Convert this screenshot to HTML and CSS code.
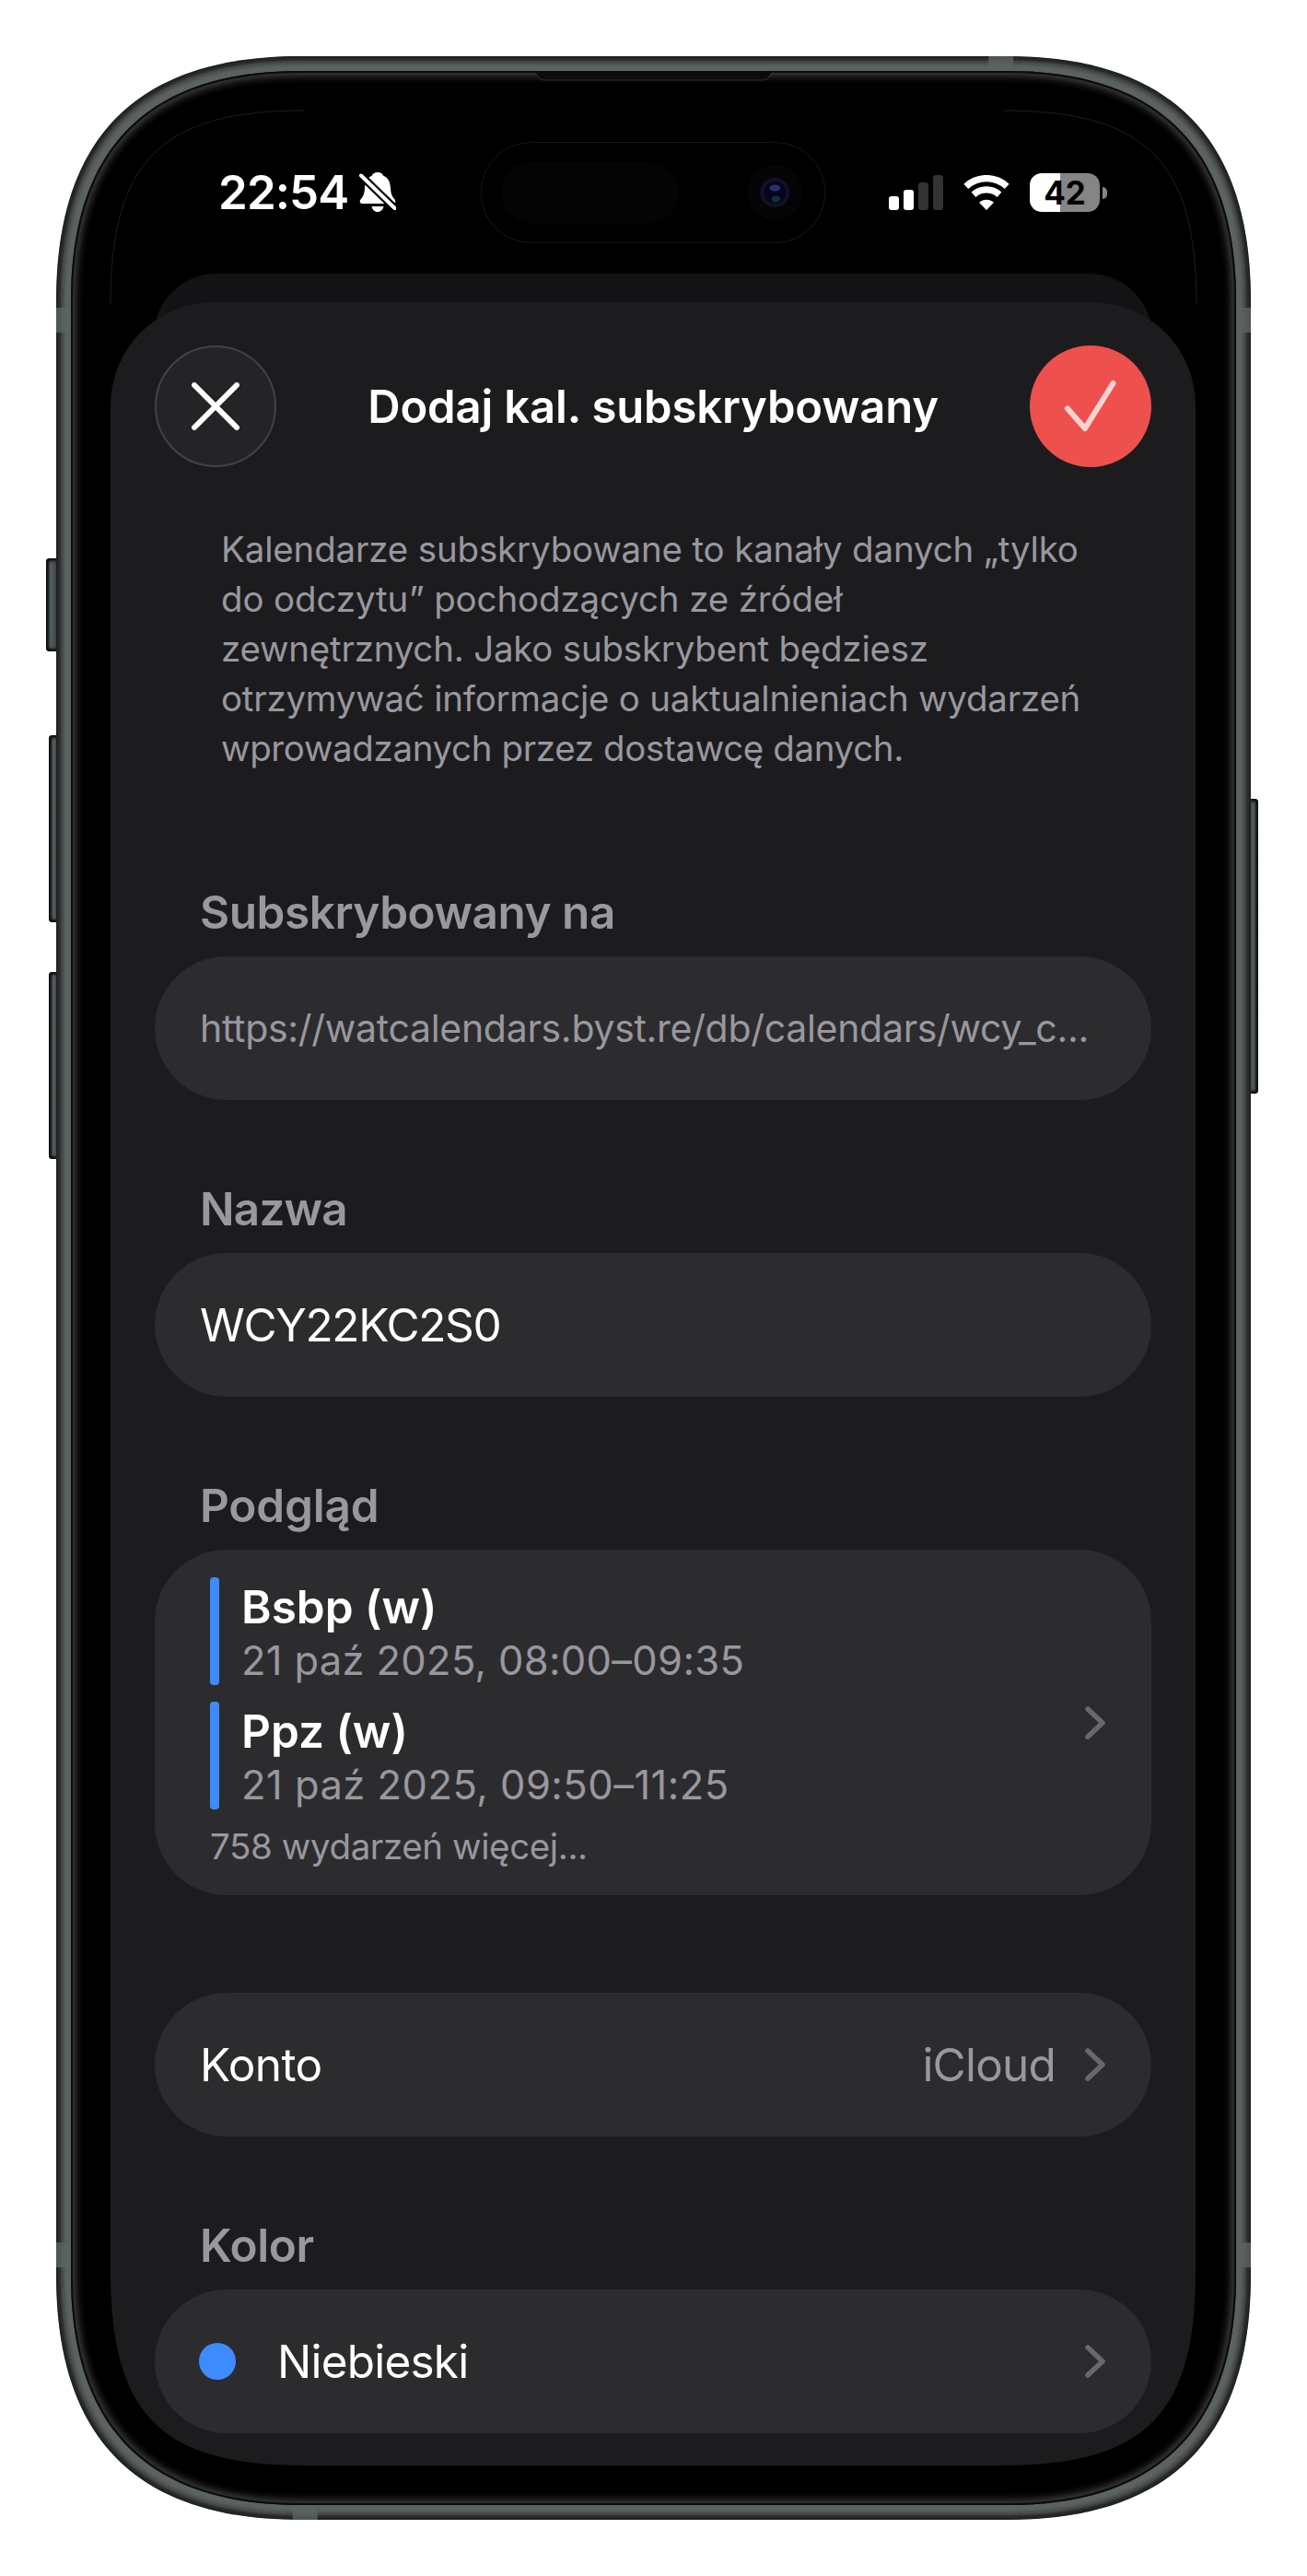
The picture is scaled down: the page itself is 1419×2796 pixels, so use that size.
FILE: index.html
```html
<!DOCTYPE html>
<html lang="pl">
<head>
<meta charset="utf-8">
<title>Dodaj kal. subskrybowany</title>
<link rel="stylesheet" href="styles.css">
</head>
<body>
<div class="phone">
  <span class="key key-action"></span>
  <span class="key key-up"></span>
  <span class="key key-down"></span>
  <span class="key key-power"></span>
  <svg class="frame" viewBox="0 0 1298 2674" preserveAspectRatio="none" aria-hidden="true">
    <defs>
      <path id="shell" d="M0 265C0 88 88 0 265 0H1033C1210 0 1298 88 1298 265V2409C1298 2586 1210 2674 1033 2674H265C88 2674 0 2586 0 2409Z"/>
      <clipPath id="shellClip"><use href="#shell"/></clipPath>
      <path id="glass" d="M16 265C16 100 100 16 265 16H1033C1198 16 1282 100 1282 265V2409C1282 2574 1198 2658 1033 2658H265C100 2658 16 2574 16 2409Z"/>
      <clipPath id="glassClip"><use href="#glass"/></clipPath>
      <filter id="soft" x="-5%" y="-5%" width="110%" height="110%"><feGaussianBlur stdDeviation="4"/></filter>
      <filter id="softRim" x="-5%" y="-5%" width="110%" height="110%"><feGaussianBlur stdDeviation="3"/></filter>
    </defs>
    <g clip-path="url(#shellClip)">
      <use href="#shell" fill="#5c6162"/>
      <use href="#shell" fill="none" stroke="#121617" stroke-width="10" filter="url(#softRim)"/>
      <g fill="#5d6162" opacity=".8">
        <path d="M0 273h18v27H0zM1280 273h18v27h-18zM0 2373h18v27H0zM1280 2373h18v27h-18zM1013 0h27v18h-27zM257 2656h27v18h-27z"/>
      </g>
    </g>
    <use href="#glass" fill="#000"/>
    <g clip-path="url(#glassClip)">
      <use href="#glass" fill="none" stroke="#444" stroke-width="10" filter="url(#soft)"/>
      <use href="#glass" fill="none" stroke="#0a0b0b" stroke-width="4"/>
    </g>
    <path d="M520 17h258l-6 7q-2 2-6 2H532q-4 0-6-2z" fill="#0b0b0b"/>
    <path d="M518 18q3 0 5 4t7 4h238q5 0 7-4t5-4" fill="none" stroke="#303030"/>
    <path d="M59 269C59 114 114 59 269 59M1029 59C1184 59 1239 114 1239 269" fill="none" stroke="#1d1d1d"/>
    <rect x="461.500" y="93.500" width="374" height="109" rx="54.500" fill="none" stroke="#181818"/>
    <rect x="483" y="115" width="194" height="66" rx="33" fill="#040404"/>
    <circle cx="781" cy="148" r="30" fill="#060407"/>
    <circle cx="781" cy="148" r="16" fill="#111226"/>
    <circle cx="781" cy="148" r="12" fill="#05061c"/>
    <ellipse cx="781" cy="143" rx="6" ry="3.500" fill="#2a2f6e"/>
    <ellipse cx="782" cy="155" rx="5" ry="3.500" fill="#0c3140"/>
  </svg>

  <main class="screen">
    <div class="status">
      <div class="status-left">
        <span class="time">22:54</span>
        <svg class="bell" viewBox="0 0 40 44">
          <path d="M20 0c3.500 0 5.500 1.800 6.200 3.800C32 6.500 33.600 11 34 17c.3 6 1.500 9 4.500 12.500 1.500 2 .8 4.500-2 4.500H3.500c-2.800 0-3.500-2.500-2-4.500C4.500 26 5.700 23 6 17 6.400 11 8 6.500 13.800 3.800 14.500 1.800 16.500 0 20 0zM13.500 37h13c-.8 3.700-3.200 6-6.500 6s-5.700-2.300-6.500-6z" fill="#fff"/>
          <path d="M2 3.500 38.500 39" stroke="#000" stroke-width="8.500"/>
          <path d="M2 3.500 38.500 39" stroke="#fff" stroke-width="4" stroke-linecap="round"/>
        </svg>
      </div>
      <div class="status-right">
        <svg class="signal" viewBox="0 0 59 38">
          <rect y="23" width="11" height="15" rx="3" fill="#fff"/>
          <rect x="16" y="16" width="11" height="22" rx="3" fill="#fff"/>
          <rect x="32" y="8" width="11" height="30" rx="3" fill="#333"/>
          <rect x="48" width="11" height="38" rx="3" fill="#333"/>
        </svg>
        <svg class="wifi" viewBox="0 0 50 38">
          <g fill="none" stroke="#fff" stroke-width="7.200">
            <path d="M2.800 12.300C15.500.600 34.500.600 47.200 12.300"/>
            <path d="M11 21.200c8-7 20-7 28 0"/>
          </g>
          <path d="M25 38l-8-8.200c4.600-4.200 11.400-4.200 16 0z" fill="#fff"/>
        </svg>
        <div class="battery"><span class="level">42</span><span class="cap"></span></div>
      </div>
    </div>

    <div class="back-sheet"></div>
    <section class="sheet">
      <header class="bar">
        <button class="round close" aria-label="Zamknij"><svg viewBox="0 0 52 52"><path d="M3 3 49 49M49 3 3 49"/></svg></button>
        <h1>Dodaj kal. subskrybowany</h1>
        <button class="round done" aria-label="Dodaj"><svg viewBox="0 0 58 58"><path d="M4 31.500 23 53 53.500 4"/></svg></button>
      </header>

      <p class="intro"><span class="l1">Kalendarze subskrybowane to kanały danych „tylko</span><br><span class="l2">do odczytu” pochodzących ze źródeł</span><br><span class="l3">zewnętrznych. Jako subskrybent będziesz</span><br><span class="l4">otrzymywać informacje o uaktualnieniach wydarzeń</span><br><span class="l5">wprowadzanych przez dostawcę danych.</span></p>

      <h2 class="h-sub">Subskrybowany na</h2>
      <div class="row"><span class="url">https://watcalendars.byst.re/db/calendars/wcy_c...</span></div>

      <h2 class="h-name">Nazwa</h2>
      <div class="row"><span class="value">WCY22KC2S0</span></div>

      <h2 class="h-prev">Podgląd</h2>
      <div class="row preview">
        <div class="events">
          <div class="event"><b>Bsbp (w)</b><span>21 paź 2025, 08:00–09:35</span></div>
          <div class="event"><b>Ppz (w)</b><span class="later">21 paź 2025, 09:50–11:25</span></div>
          <div class="more">758 wydarzeń więcej...</div>
        </div>
        <svg class="chev" viewBox="0 0 24 38"><path d="M4 4 20 19 4 34"/></svg>
      </div>

      <div class="row account"><span class="konto">Konto</span><span class="cloud">iCloud</span><svg class="chev" viewBox="0 0 24 38"><path d="M4 4 20 19 4 34"/></svg></div>

      <h2 class="h-color">Kolor</h2>
      <div class="row"><span class="dot"></span><span class="blue">Niebieski</span><svg class="chev" viewBox="0 0 24 38"><path d="M4 4 20 19 4 34"/></svg></div>
    </section>
  </main>
</div>
</body>
</html>
```
FILE: styles.css
```css
* { box-sizing: border-box; }
body { margin: 0; background: #fff; font-family: Inter, "Liberation Sans", sans-serif; color: #fff; }
h1, h2, p { margin: 0; white-space: nowrap; }
button { border: 0; padding: 0; font: inherit; }

.phone { position: relative; width: 1297px; height: 2674px; margin: 61px 0 61px 61px; padding: 59px; }
.frame { position: absolute; inset: 0; width: 1297px; height: 2674px; }

.key { position: absolute; background: linear-gradient(90deg, #101313 0, #1b2020 2px, #566060 5px, #303737 100%); border-radius: 4px 0 0 4px; box-shadow: inset 0 3px 3px #0c0f0f, inset 0 -3px 3px #0c0f0f; }
.key-action { left: -11px; top: 545px; width: 14px; height: 101px; }
.key-up { left: -8px; top: 737px; width: 11px; height: 203px; }
.key-down { left: -8px; top: 994px; width: 11px; height: 203px; }
.key-power { right: -8px; top: 806px; width: 11px; height: 320px; transform: scaleX(-1); }

.screen { position: relative; width: 1178px; height: 2556px; padding-top: 59px; clip-path: path("M0 210C0 55 55 0 210 0H968C1123 0 1178 55 1178 210V2346C1178 2501 1123 2556 968 2556H210C55 2556 0 2501 0 2346Z"); }

.status { height: 60px; display: flex; justify-content: space-between; align-items: center; padding: 0 96px 0 117px; }
.status-left, .status-right { display: flex; align-items: center; }
.time { font-size: 51px; line-height: 60px; font-weight: 600; letter-spacing: -.9px; }
.bell { width: 40px; height: 44px; margin-left: 12px; }
.signal { width: 59px; height: 38px; margin-right: 22px; }
.wifi { width: 50px; height: 38px; margin-right: 22px; }
.battery { display: flex; align-items: center; gap: 3px; }
.level { width: 76px; height: 42px; border-radius: 13px; background: linear-gradient(90deg, #fff 43%, #858585 43%); color: #000; font-size: 35px; line-height: 42px; font-weight: 700; text-align: center; }
.cap { width: 5px; height: 13px; border-radius: 0 6px 6px 0; background: #858585; }

.back-sheet { height: 120px; width: 1084px; margin: 58px auto -89px; background: #131315; border-radius: 68px 68px 0 0; }
.sheet { position: relative; height: 2348px; background: #1c1c1e; border-radius: 112px 112px 0 0; padding: 47px 48px 0 48px; }

.bar { display: flex; justify-content: space-between; align-items: center; height: 132px; }
.round { width: 132px; height: 132px; border-radius: 50%; display: flex; align-items: center; justify-content: center; }
.round path { fill: none; stroke-width: 6; stroke-linecap: round; stroke-linejoin: round; }
.close { background: #242427; border: 2px solid #434346; }
.close svg { width: 52px; height: 52px; }
.close path { stroke: #fff; }
.done { background: #ee504e; }
.done svg { width: 58px; height: 58px; }
.done path { stroke: #fbd3d0; }
h1 { font-size: 49px; line-height: 60px; font-weight: 600; letter-spacing: -.15px; padding-top: 2px; }

.intro { margin: 62px 0 0 72px; font-size: 38.500px; line-height: 54px; color: #98989f; }
.l1 { letter-spacing: -.17px; }
.l2 { letter-spacing: -.13px; }
.l3 { letter-spacing: -.22px; }
.l4 { letter-spacing: -.24px; }
.l5 { letter-spacing: -.36px; }
h2 { height: 60px; margin: 121px 0 18px 49px; font-size: 49.500px; line-height: 60px; font-weight: 600; color: #98989f; }
.h-sub { letter-spacing: -.47px; }
.h-name { letter-spacing: -.8px; }
.h-prev { letter-spacing: -.2px; }
.h-color { letter-spacing: -.4px; }
.row { width: 1082px; height: 156px; border-radius: 78px; background: #2c2c2e; display: flex; align-items: center; padding: 0 49px 0 49px; white-space: nowrap; }
.row + h2 { margin-top: 88px; }
.url { font-size: 41px; letter-spacing: -.3px; color: #98989f; }
.value, .konto, .blue, .cloud { font-size: 49.500px; }
.value { letter-spacing: -1.350px; }
.konto { letter-spacing: -.6px; }
.blue { letter-spacing: -.8px; }
.cloud { letter-spacing: -.8px; color: #98989f; margin-left: auto; }
.chev { width: 24px; height: 38px; margin-left: auto; }
.cloud + .chev { margin-left: 31px; }
.chev path { fill: none; stroke: #68686d; stroke-width: 5.500; stroke-linecap: round; stroke-linejoin: round; }
.preview { height: 375px; }
.events { display: flex; flex-direction: column; margin-left: 11px; align-self: flex-start; padding-top: 30px; }
.event { position: relative; display: flex; flex-direction: column; height: 117px; margin-bottom: 18px; padding-left: 34px; }
.event::before { content: ""; position: absolute; left: 0; top: 0; width: 10px; height: 117px; border-radius: 4px; background: #3d8bff; }
.event b { font-size: 49.500px; line-height: 60px; height: 60px; font-weight: 600; margin-top: 2px; }
.event span { font-size: 43.500px; line-height: 56px; letter-spacing: .32px; color: #98989f; }
.event .later { letter-spacing: .48px; }
.more { font-size: 38.500px; line-height: 44px; letter-spacing: -.4px; color: #98989f; }
.account { margin-top: 106px; }
.dot { width: 40px; height: 40px; border-radius: 50%; background: #3d8bff; margin: 0 45px 0 -1px; }
```
